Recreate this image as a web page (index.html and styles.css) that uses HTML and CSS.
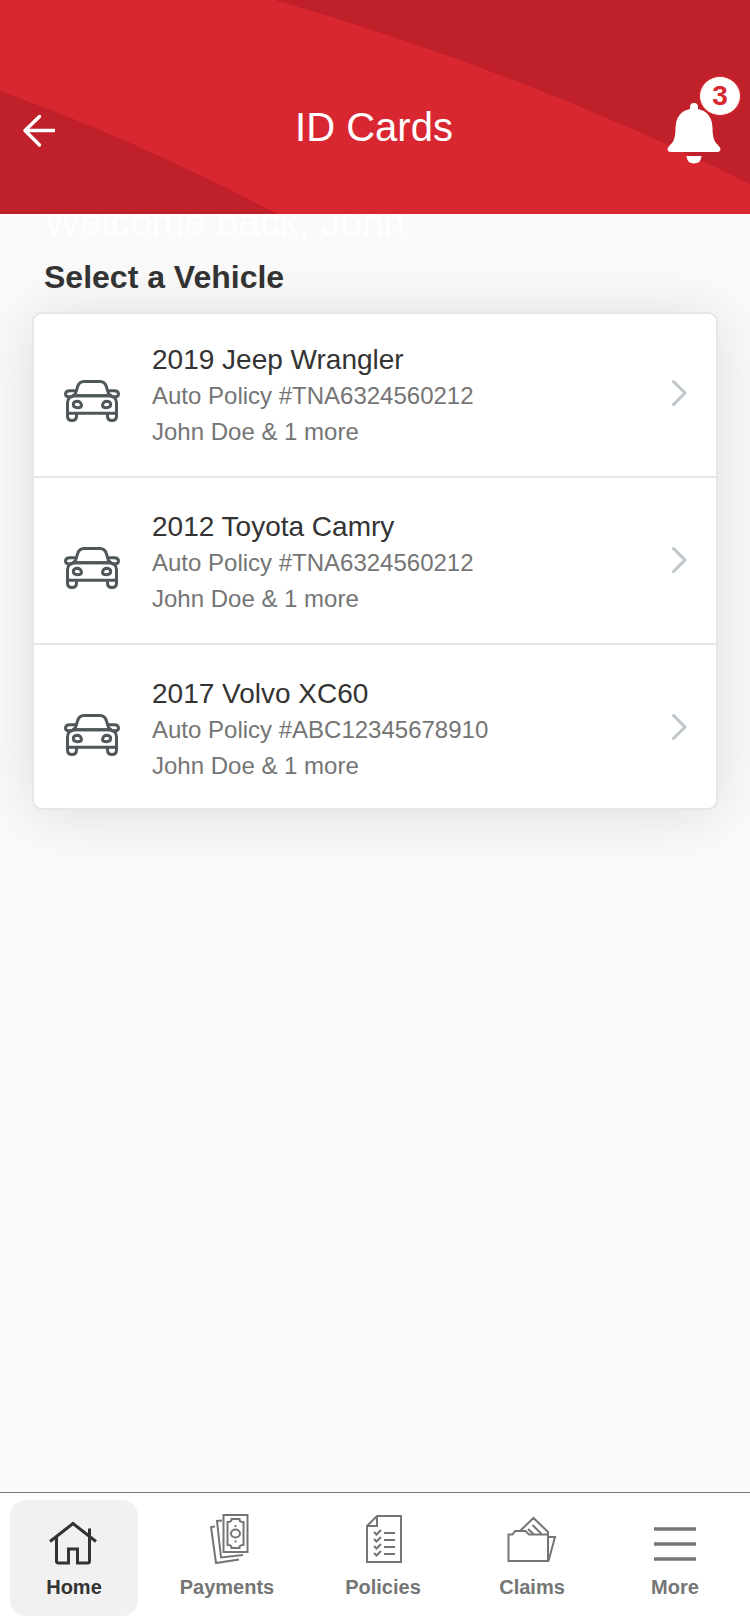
FILE: index.html
```html
<!DOCTYPE html>
<html lang="en">
<head>
<meta charset="utf-8">
<meta name="viewport" content="width=device-width, initial-scale=1">
<title>ID Cards</title>
<link rel="stylesheet" href="styles.css">
</head>
<body>
<svg class="sprite" aria-hidden="true">
  <symbol id="car" viewBox="0 0 56 42" fill="none" stroke="#4f575a" stroke-width="3" stroke-linejoin="round">
    <path d="M10.500 15.700 C12 13 12.500 10 13.500 7 Q15 1.500 20 1.500 H36 Q41 1.500 42.500 7 C43.500 10 44 13 45.500 15.700 Z"/>
    <path d="M11.500 10.700 H6 Q1.500 10.700 1.500 14.200 Q1.800 16.700 4.500 16.700 H8 L11 14"/>
    <path d="M44.500 10.700 H50 Q54.500 10.700 54.500 14.200 Q54.200 16.700 51.500 16.700 H48 L45 14"/>
    <path d="M11 15.700 Q3.500 16 3.500 23 V33.300 H52.500 V23 Q52.500 16 45 15.700 Z"/>
    <path d="M3.500 33 V36 Q3.500 40.500 8 40.500 Q12.500 40.500 12.500 36 V33"/>
    <path d="M43.500 33 V36 Q43.500 40.500 48 40.500 Q52.500 40.500 52.500 36 V33"/>
    <path d="M13 21.200 Q9.300 21.500 9.300 24.500 Q9.500 27.700 13.500 27.700 Q17.800 27.700 17.500 25.500 Q17 21.200 13 21.200 Z"/>
    <path d="M43 21.200 Q46.700 21.500 46.700 24.500 Q46.500 27.700 42.500 27.700 Q38.200 27.700 38.500 25.500 Q39 21.200 43 21.200 Z"/>
  </symbol>
  <symbol id="chevron" viewBox="0 0 16 28" fill="none" stroke="#bcc6cb" stroke-width="3" stroke-linecap="round" stroke-linejoin="round">
    <path d="M2.500 2.500 L14 14 L2.500 25.500"/>
  </symbol>
</svg>

<header class="header">
  <svg class="swoosh" viewBox="0 0 750 214" preserveAspectRatio="none" aria-hidden="true">
    <path fill="#bf202a" d="M275 0 Q530 74 750 184 V0 Z M0 91 Q139 141 277 214 H0 Z"/>
  </svg>
  <button class="icon-button back" type="button" aria-label="Back">
    <svg width="34" height="34" viewBox="0 0 34 34" fill="none" stroke="#fff" stroke-width="3.500" stroke-linecap="round" stroke-linejoin="round"><path d="M17.500 2.500 L3 16.500 L17.500 31"/><path stroke-linecap="butt" d="M3 16.500 H33"/></svg>
  </button>
  <h1 class="title">ID Cards</h1>
  <button class="icon-button alerts" type="button" aria-label="Notifications, 3 new">
    <svg width="54" height="62" viewBox="0 0 54 62" fill="#fff"><path d="M23 7 V5 Q23 1 27 1 Q31 1 31 5 V7 Q45 10 45.500 26 Q45.500 37 49 41 Q53.500 45 53.500 47.500 Q53 50 50 50 H4 Q1 50 0.500 47.500 Q0.500 45 5 41 Q8.500 37 8.500 26 Q9 10 23 7 Z"/><path d="M19.500 54 H34.500 Q34 61.500 27 61.500 Q20 61.500 19.500 54 Z"/></svg>
    <span class="badge">3</span>
  </button>
</header>

<main class="content">
  <p class="welcome">Welcome back, John</p>
  <h2 class="heading">Select a Vehicle</h2>
  <ul class="card">
    <li><a class="vehicle" href="#">
      <svg class="car" aria-hidden="true"><use href="#car"/></svg>
      <span class="details"><span class="name">2019 Jeep Wrangler</span><span>Auto Policy #TNA6324560212</span><span>John Doe &amp; 1 more</span></span>
      <svg class="chevron" aria-hidden="true"><use href="#chevron"/></svg>
    </a></li>
    <li><a class="vehicle" href="#">
      <svg class="car" aria-hidden="true"><use href="#car"/></svg>
      <span class="details"><span class="name">2012 Toyota Camry</span><span>Auto Policy #TNA6324560212</span><span>John Doe &amp; 1 more</span></span>
      <svg class="chevron" aria-hidden="true"><use href="#chevron"/></svg>
    </a></li>
    <li><a class="vehicle" href="#">
      <svg class="car" aria-hidden="true"><use href="#car"/></svg>
      <span class="details"><span class="name">2017 Volvo XC60</span><span>Auto Policy #ABC12345678910</span><span>John Doe &amp; 1 more</span></span>
      <svg class="chevron" aria-hidden="true"><use href="#chevron"/></svg>
    </a></li>
  </ul>
</main>

<nav class="tabs" aria-label="Main">
  <a class="tab active" href="#" aria-current="page">
    <svg class="tab-icon" viewBox="0 0 52 52" stroke-width="3"><path d="M2 26.500 L25 8.500 L48 26.500"/><path d="M8.500 22 V46 Q8.500 48 10.500 48 H20.500 V34 H29.500 V48 H39.500 Q41.500 48 41.500 46 V13.500"/></svg>
    Home
  </a>
  <a class="tab" href="#">
    <svg class="tab-icon" viewBox="0 0 52 52" stroke-width="2"><path d="M22.500 0 H46.500 V37 H22.500 Z"/><path d="M30.500 4 H38.500 V5 Q38.500 7 42.500 7 V30 Q38.500 30 38.500 32 V33 H30.500 V32 Q30.500 30 26.500 30 V7 Q30.500 7 30.500 5 Z"/><ellipse cx="34.500" cy="18.500" rx="4.500" ry="4"/><path d="M33.500 11 H35.500 M33.500 26.500 H35.500"/><path d="M21 5.500 L16 6 L20 42.500 L42 40"/><path d="M14 11.500 L10 12 L15 48 L38 44.500"/></svg>
    Payments
  </a>
  <a class="tab" href="#">
    <svg class="tab-icon" viewBox="0 0 52 52" stroke-width="2"><path d="M20 1 H44 V47 H10 V11 Z M20 1 V11 H10"/><path d="M17 17 L19.500 19.500 L24 15 M17 24 L19.500 26.500 L24 22 M17 31 L19.500 33.500 L24 29 M17 38 L19.500 40.500 L24 36 M27 18 H38 M27 25 H38 M27 32 H38 M27 39 H38"/></svg>
    Policies
  </a>
  <a class="tab" href="#">
    <svg class="tab-icon" viewBox="0 0 52 52" stroke-width="2"><path d="M2.500 19.500 H6.500 L9 16 H19.500 L23 19.500 H42 V46 H2.500 Z"/><path d="M14.500 15.500 L27.500 3 L42 17 V20 M26.500 10 L35.500 19 M22 14 L27.500 19"/><path d="M42.500 22 H49 L42.500 46"/></svg>
    Claims
  </a>
  <a class="tab" href="#">
    <svg class="tab-icon" viewBox="0 0 52 52" stroke-width="3.500"><path d="M5 14 H47 M5 29 H47 M5 44 H47"/></svg>
    More
  </a>
</nav>
</body>
</html>
```
FILE: styles.css
```css
* { box-sizing: border-box; margin: 0; padding: 0; }

body {
  min-height: 100vh;
  display: flex;
  flex-direction: column;
  background: #fafafa;
  color: #333;
  font-family: "Liberation Sans", Arial, Helvetica, sans-serif;
}

a { color: inherit; text-decoration: none; }

.sprite { position: absolute; width: 0; height: 0; }

.header {
  position: relative;
  z-index: 1;
  display: grid;
  grid-template-columns: 78px 1fr 74px;
  align-items: end;
  padding: 74px 16px 48px 10px;
  background: #d92731;
  color: #fff;
}

.swoosh { position: absolute; inset: 0; width: 100%; height: 100%; }

.title {
  position: relative;
  padding-bottom: 15px;
  font-size: 40px;
  line-height: 48px;
  font-weight: 400;
  text-align: center;
}

.icon-button {
  position: relative;
  display: flex;
  border: 0;
  background: none;
  color: #d92731;
  font: inherit;
  cursor: pointer;
}

.back { padding: 12px 12px 18px; }

.alerts { padding: 28px 0 2px 7px; justify-self: start; }

.badge {
  position: absolute;
  top: 2px;
  left: 39px;
  width: 42px;
  height: 40px;
  border: 1px solid #d92731;
  border-radius: 50%;
  background: #fff;
  font-size: 28px;
  line-height: 38px;
  font-weight: 700;
  text-align: center;
}

.content { flex: 1; padding: 0 32px; }

.welcome {
  margin: -14px 0 0 12px;
  color: #fff;
  font-size: 39px;
  line-height: 44px;
}

.heading {
  margin: 15px 12px 17px;
  font-size: 32px;
  line-height: 36px;
}

.card {
  list-style: none;
  border: 2px solid #e6e6e6;
  border-radius: 10px;
  background: #fff;
  box-shadow: 0 4px 60px rgba(0, 0, 0, 0.12);
}

.card li + li { border-top: 2px solid #e6e6e6; }

.vehicle {
  display: flex;
  align-items: center;
  padding: 28px 29px 26px 30px;
}

.card li + li .vehicle { padding-top: 31px; }

.card li:last-child .vehicle { padding-bottom: 24px; }

.car { flex: none; width: 56px; height: 42px; margin-top: 10px; }

.details {
  flex: 1;
  display: grid;
  margin-left: 32px;
  color: #757575;
  font-size: 24px;
  line-height: 36px;
}

.name { color: #333; font-size: 28px; }

.chevron { flex: none; width: 16px; height: 28px; margin-bottom: 6px; }

.tabs {
  display: grid;
  grid-template-columns: 148fr 158fr 154fr 144fr 142fr;
  padding: 7px 4px 8px 0;
  border-top: 1px solid #757575;
  background: #fff;
}

.tab {
  display: flex;
  flex-direction: column;
  align-items: center;
  gap: 8px;
  margin: 0 10px;
  padding: 15px 0 17px;
  border-radius: 16px;
  color: #757575;
  font-size: 20px;
  line-height: 24px;
  font-weight: 700;
}

.tab.active { background: #f1f1f1; color: #333; }

.tab-icon {
  width: 52px;
  height: 52px;
  overflow: visible;
  fill: none;
  stroke: currentColor;
}
```
